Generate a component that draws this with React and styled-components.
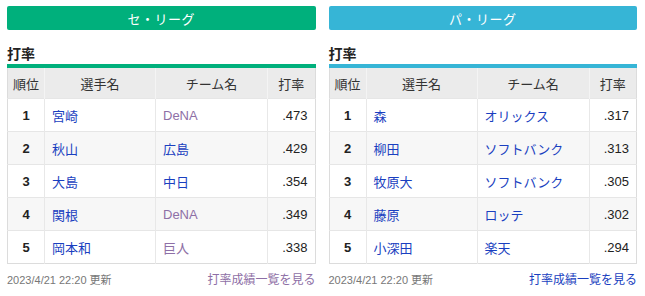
import React from "react";
import styled, { createGlobalStyle } from "styled-components";

const Global = createGlobalStyle`
  html, body { margin: 0; padding: 0; background: #fff; }
  body { font-family: "Liberation Sans", Arial, "Noto Sans CJK JP", sans-serif; color: #333; }
`;

const Wrap = styled.div`
  display: grid;
  grid-template-columns: 1fr 1fr;
  column-gap: 13px;
  padding: 6px 8px 0 7px;
`;

const Panel = styled.section`
  display: flex;
  flex-direction: column;
  min-width: 0;
`;

const Banner = styled.div`
  height: 24px;
  border-radius: 2px;
  background: ${(p) => p.$color};
  color: #fff;
  font-size: 13px;
  display: flex;
  align-items: center;
  justify-content: center;
  letter-spacing: 0.5px;
`;

const Heading = styled.h3`
  margin: 14px 0 0;
  height: 20px;
  font-size: 14px;
  font-weight: bold;
  line-height: 20px;
  color: #222;
`;

const Table = styled.table`
  width: 100%;
  border-collapse: collapse;
  border: 1px solid #dcdcdc;
  font-size: 13px;
  table-layout: fixed;
`;

const HeadRow = styled.tr`
  background: #ebebeb;
  border-top: 4px solid ${(p) => p.$color};
`;

const Th = styled.th`
  height: 30px;
  padding: 0;
  font-weight: normal;
  color: #333;
  text-align: center;
  border-left: 1px solid #f4f4f4;
  &:first-child { border-left: none; }
`;

const Row = styled.tr`
  background: ${(p) => (p.$even ? "#f7f7f7" : "#fff")};
  border-top: 1px solid #e6e6e6;
`;

const Td = styled.td`
  height: 32px;
  padding: 0 7px;
  border-left: 1px solid #e8e8e8;
  text-align: ${(p) => p.$align || "left"};
  font-weight: ${(p) => (p.$bold ? "bold" : "normal")};
  color: #222;
  white-space: nowrap;
  &:first-child { border-left: none; }
`;

const Link = styled.a`
  color: ${(p) => (p.$visited ? "#8e6fa6" : "#1a3fc0")};
  text-decoration: none;
`;

const Footer = styled.div`
  display: flex;
  justify-content: space-between;
  align-items: center;
  margin-top: 6px;
`;

const Updated = styled.span`
  font-size: 11px;
  color: #777;
`;

const More = styled.a`
  font-size: 12px;
  color: ${(p) => (p.$visited ? "#8e6fa6" : "#1a3fc0")};
  text-decoration: none;
`;

const leagues = [
  {
    name: "セ・リーグ",
    color: "#00b07c",
    moreVisited: true,
    rows: [
      ["1", "宮崎", "DeNA", true, ".473"],
      ["2", "秋山", "広島", false, ".429"],
      ["3", "大島", "中日", false, ".354"],
      ["4", "関根", "DeNA", true, ".349"],
      ["5", "岡本和", "巨人", true, ".338"],
    ],
  },
  {
    name: "パ・リーグ",
    color: "#36b5d6",
    moreVisited: false,
    rows: [
      ["1", "森", "オリックス", false, ".317"],
      ["2", "柳田", "ソフトバンク", false, ".313"],
      ["3", "牧原大", "ソフトバンク", false, ".305"],
      ["4", "藤原", "ロッテ", false, ".302"],
      ["5", "小深田", "楽天", false, ".294"],
    ],
  },
];

function League({ data }) {
  return (
    <Panel>
      <Banner $color={data.color}>{data.name}</Banner>
      <Heading>打率</Heading>
      <Table>
        <colgroup>
          <col style={{ width: "37px" }} />
          <col style={{ width: "111px" }} />
          <col style={{ width: "112px" }} />
          <col />
        </colgroup>
        <thead>
          <HeadRow $color={data.color}>
            <Th>順位</Th>
            <Th>選手名</Th>
            <Th>チーム名</Th>
            <Th>打率</Th>
          </HeadRow>
        </thead>
        <tbody>
          {data.rows.map((r, i) => (
            <Row key={r[0]} $even={i % 2 === 1}>
              <Td $align="center" $bold>{r[0]}</Td>
              <Td><Link href="#">{r[1]}</Link></Td>
              <Td><Link href="#" $visited={r[3]}>{r[2]}</Link></Td>
              <Td $align="right">{r[4]}</Td>
            </Row>
          ))}
        </tbody>
      </Table>
      <Footer>
        <Updated>2023/4/21 22:20 更新</Updated>
        <More href="#" $visited={data.moreVisited}>打率成績一覧を見る</More>
      </Footer>
    </Panel>
  );
}

export default function App() {
  return (
    <>
      <Global />
      <Wrap>
        {leagues.map((l) => (
          <League key={l.name} data={l} />
        ))}
      </Wrap>
    </>
  );
}
